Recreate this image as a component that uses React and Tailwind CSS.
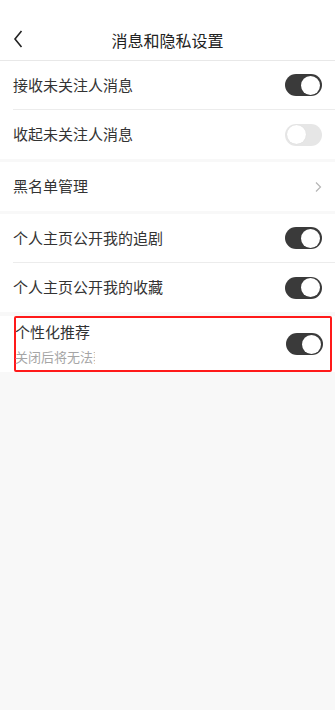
import { useState } from "react";

function Toggle({ on }) {
  return (
    <div
      className={
        "w-[37px] h-[22px] rounded-full flex items-center px-[2px] " +
        (on ? "bg-[#3a3a3a] justify-end" : "bg-[#e6e6e6] justify-start")
      }
    >
      <div
        className={
          "w-[19px] h-[19px] rounded-full bg-white " +
          (on ? "" : "shadow-[0_0_1px_rgba(0,0,0,0.1)]")
        }
      />
    </div>
  );
}

function Row({ label, on, last }) {
  return (
    <div className="bg-white pl-[13px]">
      <div
        className={
          "h-[49px] flex items-center justify-between pr-[13px] " +
          (last ? "" : "border-b border-[#ececec]")
        }
      >
        <span className="text-[15px] text-[#333]">{label}</span>
        <Toggle on={on} />
      </div>
    </div>
  );
}

export default function App() {
  const [state] = useState({ a: true, b: false, c: true, d: true, e: true });

  return (
    <div
      className="min-h-[710px] bg-[#f8f8f8] w-[335px]"
      style={{ fontFamily: '"Noto Sans CJK SC", "Noto Sans", sans-serif' }}
    >
      {/* Header */}
      <header className="bg-white h-[61px] pt-[20px] border-b border-[#e8e8e8] flex items-center relative">
        <svg
          className="absolute left-[12px] top-[29px]"
          width="12"
          height="20"
          viewBox="0 0 12 20"
          fill="none"
          stroke="#222"
          strokeWidth="1.6"
        >
          <path d="M9.5 2 L3 10 L9.5 18" />
        </svg>
        <div className="flex-1 text-center text-[16px] text-[#222]">消息和隐私设置</div>
      </header>

      <Row label="接收未关注人消息" on={state.a} />
      <Row label="收起未关注人消息" on={state.b} last />

      <div className="h-[3px]" />

      <div className="bg-white h-[49px] flex items-center justify-between px-[13px]">
        <span className="text-[15px] text-[#333]">黑名单管理</span>
        <svg width="8" height="12" viewBox="0 0 8 12" fill="none" stroke="#b5b5b5" strokeWidth="1.2">
          <path d="M2 1.5 L6.5 6 L2 10.5" />
        </svg>
      </div>

      <div className="h-[3px]" />

      <Row label="个人主页公开我的追剧" on={state.c} />
      <Row label="个人主页公开我的收藏" on={state.d} last />

      <div className="h-[4px]" />

      {/* highlighted row */}
      <div className="bg-white pl-[14px] pr-[3px]">
        <div className="h-[56px] border-2 border-[#ff1a1a] rounded-[2px] flex items-center justify-between pr-[7px]">
          <div className="flex flex-col self-stretch pt-[3px]">
            <span className="text-[15px] text-[#333] leading-[22px] -ml-[1px]">个性化推荐</span>
            <span className="text-[13px] text-[#a5a5a5] leading-[18px] w-[80px] overflow-hidden whitespace-nowrap mt-[5px] -ml-[1px]">
              关闭后将无法获取
            </span>
          </div>
          <Toggle on={state.e} />
        </div>
      </div>
    </div>
  );
}
